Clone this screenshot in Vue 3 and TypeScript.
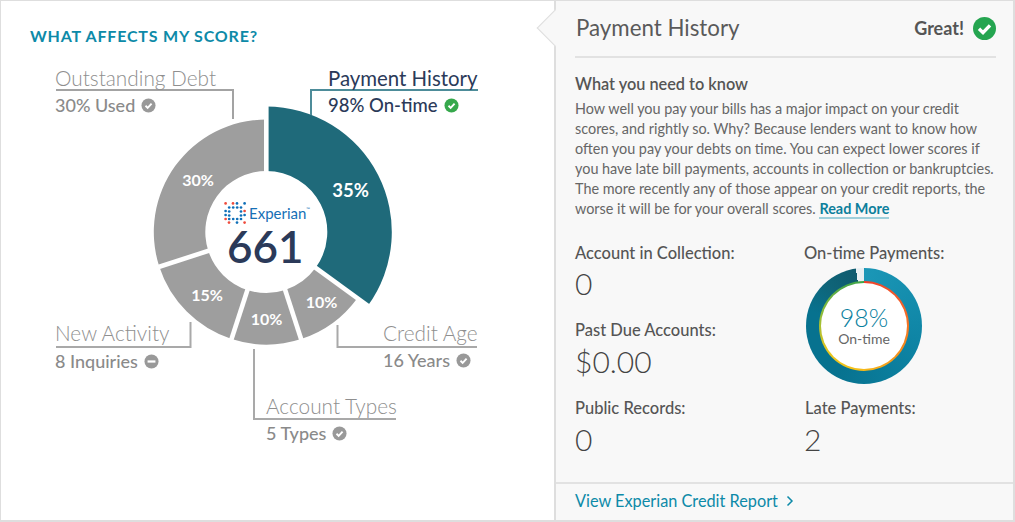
<script setup lang="ts">
const cx = 266.3
const cy = 232
const rad = (d: number) => (d * Math.PI) / 180
const pt = (r: number, a: number) => `${(cx + r * Math.sin(rad(a))).toFixed(2)} ${(cy - r * Math.cos(rad(a))).toFixed(2)}`
const arc = (r0: number, r1: number, a0: number, a1: number) =>
  `M${pt(r0, a0)} L${pt(r1, a0)} A${r1} ${r1} 0 ${a1 - a0 > 180 ? 1 : 0} 1 ${pt(r1, a1)} L${pt(r0, a1)} A${r0} ${r0} 0 ${a1 - a0 > 180 ? 1 : 0} 0 ${pt(r0, a0)}Z`

const segments = [
  { d: arc(61, 125.5, 0, 126), fill: '#1f6a7a' },
  { d: arc(61, 112.5, 126, 162), fill: '#9e9e9e' },
  { d: arc(61, 112.5, 162, 198), fill: '#9e9e9e' },
  { d: arc(61, 112.5, 198, 252), fill: '#9e9e9e' },
  { d: arc(61, 112.5, 252, 360), fill: '#9e9e9e' },
]
const gaps = [0, 126, 162, 198, 252].map((a) => `M${pt(50, a)} L${pt(132, a)}`)
const pcts = [
  { x: 350.5, y: 197, t: '35%', big: true },
  { x: 198, y: 185.5, t: '30%', big: false },
  { x: 207, y: 301, t: '15%', big: false },
  { x: 266.5, y: 324.5, t: '10%', big: false },
  { x: 321.5, y: 307.5, t: '10%', big: false },
]

const red = '#ef4b3c'
const blue = '#0f6fb8'
const dots: { x: number; y: number; c: string }[] = [
  { x: 225.6, y: 203.4, c: red }, { x: 233, y: 203.4, c: red }, { x: 237, y: 203.4, c: blue }, { x: 244.6, y: 203.4, c: blue },
  { x: 225.6, y: 211, c: blue }, { x: 225.6, y: 215, c: blue }, { x: 244.6, y: 211, c: red }, { x: 244.6, y: 215, c: blue },
  { x: 225.6, y: 219, c: red }, { x: 229, y: 222.6, c: red }, { x: 237, y: 222.6, c: blue }, { x: 244.6, y: 222.6, c: red },
]
for (const v of [207.5, 211.5, 215.5, 219]) {
  for (const u of [229.2, 233.2, 237.2, 241]) {
    if (v === 207.5 || v === 219 || u === 229.2 || u === 241) dots.push({ x: u, y: v, c: blue })
  }
}
</script>

<template>
  <div class="frame">
    <section class="left">
      <h2 class="title">WHAT AFFECTS MY SCORE?</h2>

      <svg class="chart" width="553" height="520" viewBox="0 0 553 520">
        <path v-for="(s, i) in segments" :key="i" :d="s.d" :fill="s.fill" />
        <path v-for="(g, i) in gaps" :key="'g' + i" :d="g" stroke="#fff" stroke-width="4.6" />
        <text v-for="(p, i) in pcts" :key="'p' + i" :x="p.x" :y="p.y" :class="['pct', { big: p.big }]" text-anchor="middle">{{ p.t }}</text>
        <circle v-for="(d, i) in dots" :key="'d' + i" :cx="d.x" :cy="d.y" r="1.35" :fill="d.c" />
        <g fill="none" stroke-width="2">
          <path d="M56 90H233V119" stroke="#a3a3a3" />
          <path d="M478 90H311V115" stroke="#4d8c99" />
          <path d="M56 347H190.500V322" stroke="#a9a9a9" />
          <path d="M477 347H337.500V325" stroke="#a9a9a9" />
          <path d="M254 349V419H396" stroke="#a9a9a9" />
        </g>
      </svg>

      <div class="brand">Experian<sup>™</sup></div>
      <div class="score">661</div>

      <div class="callout outstanding">
        <div class="name">Outstanding Debt</div>
        <div class="detail"><span>30% Used</span>
          <svg class="tick" viewBox="0 0 16 16"><circle cx="8" cy="8" r="7.500" fill="#999" /><path d="M4.800 8.300l2.300 2.200 4.200-4.600" fill="none" stroke="#fff" stroke-width="2" /></svg>
        </div>
      </div>
      <div class="callout history">
        <div class="name">Payment History</div>
        <div class="detail"><span>98% On-time</span>
          <svg class="tick" viewBox="0 0 16 16"><circle cx="8" cy="8" r="7.500" fill="#36a84c" /><path d="M4.800 8.300l2.300 2.200 4.200-4.600" fill="none" stroke="#fff" stroke-width="2" /></svg>
        </div>
      </div>
      <div class="callout activity">
        <div class="name">New Activity</div>
        <div class="detail"><span>8 Inquiries</span>
          <svg class="tick" viewBox="0 0 16 16"><circle cx="8" cy="8" r="7.500" fill="#999" /><path d="M3.800 8h8.400" fill="none" stroke="#fff" stroke-width="2.400" /></svg>
        </div>
      </div>
      <div class="callout age">
        <div class="name">Credit Age</div>
        <div class="detail"><span>16 Years</span>
          <svg class="tick" viewBox="0 0 16 16"><circle cx="8" cy="8" r="7.500" fill="#999" /><path d="M4.800 8.300l2.300 2.200 4.200-4.600" fill="none" stroke="#fff" stroke-width="2" /></svg>
        </div>
      </div>
      <div class="callout types">
        <div class="name">Account Types</div>
        <div class="detail"><span>5 Types</span>
          <svg class="tick" viewBox="0 0 16 16"><circle cx="8" cy="8" r="7.500" fill="#999" /><path d="M4.800 8.300l2.300 2.200 4.200-4.600" fill="none" stroke="#fff" stroke-width="2" /></svg>
        </div>
      </div>
    </section>

    <section class="right">
      <span class="pointer"></span>
      <div class="body">
        <header class="head">
          <h1 class="head-title">Payment History</h1>
          <div class="grade"><span>Great!</span>
            <svg class="grade-icon" viewBox="0 0 23 23"><circle cx="11.500" cy="11.500" r="11.500" fill="#25a550" /><path d="M6 11.800l4 3.900 7-7.400" fill="none" stroke="#fff" stroke-width="3.400" /></svg>
          </div>
        </header>

        <h3 class="know">What you need to know</h3>
        <p class="copy">How well you pay your bills has a major impact on your credit scores, and rightly so. Why? Because lenders want to know how often you pay your debts on time. You can expect lower scores if you have late bill payments, accounts in collection or bankruptcies. The more recently any of those appear on your credit reports, the worse it will be for your overall scores. <a class="more">Read More</a></p>

        <div class="stats">
          <div class="col">
            <div class="label">Account in Collection:</div>
            <div class="value">0</div>
            <div class="label second">Past Due Accounts:</div>
            <div class="value v2">$0.00</div>
            <div class="label third">Public Records:</div>
            <div class="value v3">0</div>
          </div>
          <div class="col col-right">
            <div class="label">On-time Payments:</div>
            <div class="ring">
              <div class="ring-inner">
                <div class="ring-hole">
                  <div class="ring-num">98%</div>
                  <div class="ring-cap">On-time</div>
                </div>
              </div>
            </div>
            <div class="label late">Late Payments:</div>
            <div class="value v3">2</div>
          </div>
        </div>
      </div>
      <footer class="foot">
        <a class="foot-link">View Experian Credit Report</a>
        <svg class="chev" width="8" height="12" viewBox="0 0 8 12"><path d="M1.500 1.500L6 6l-4.500 4.500" fill="none" stroke="#0d8aa8" stroke-width="1.500" /></svg>
      </footer>
    </section>
  </div>
</template>

<style>
html, body { margin: 0; background: #fff; }
</style>

<style scoped>
.frame {
  width: 1015px;
  height: 522px;
  box-sizing: border-box;
  display: flex;
  border: 1px solid #dedede;
  border-right-width: 2px;
  border-bottom-width: 2px;
  font-family: Lato, "Open Sans", sans-serif;
  overflow: hidden;
  background: #fff;
}
.left {
  position: relative;
  flex: 0 0 553px;
  box-sizing: border-box;
  padding: 25px 0 0 29px;
}
.title {
  margin: 0;
  font-size: 16px;
  line-height: 20px;
  font-weight: 700;
  letter-spacing: 0.8px;
  color: #0d8aa8;
}
.chart { position: absolute; left: -1px; top: -1px; }
.pct { font: 700 16px Lato, sans-serif; fill: #fff; }
.pct.big { font-size: 18.5px; }
.brand {
  position: absolute;
  left: 248px;
  top: 202px;
  font: 400 15px/20px Lato, sans-serif;
  color: #1670b6;
}
.brand sup { font-size: 5px; vertical-align: 8px; line-height: 0; }
.score {
  position: absolute;
  left: 226px;
  top: 216px;
  font-size: 44px;
  line-height: 58px;
  font-weight: 600;
  color: #2b3a59;
}
.callout { position: absolute; }
.name { font-size: 20.8px; line-height: 24px; font-weight: 300; color: #8f8f8f; }
.detail { font-size: 18px; line-height: 24px; font-weight: 500; color: #8a8a8a; margin-top: 3px; display: flex; align-items: center; gap: 6px; white-space: nowrap; }
.tick { width: 15px; height: 15px; }
.outstanding { left: 54px; top: 65px; }
.history { left: 327px; top: 65px; }
.history .name { color: #2b3a59; font-weight: 400; font-size: 20.4px; }
.history .detail { color: #2b3a59; font-size: 18.5px; }
.activity { left: 54px; top: 320px; }
.activity .detail { margin-top: 4px; }
.age { left: 382px; top: 320px; }
.types { left: 265px; top: 393px; }

.right {
  position: relative;
  flex: 1;
  min-width: 0;
  display: flex;
  flex-direction: column;
  background: #f8f8f8;
  border-left: 2px solid #dedede;
}
.pointer {
  position: absolute;
  left: -14px;
  top: 14px;
  width: 26px;
  height: 26px;
  box-sizing: border-box;
  background: #f8f8f8;
  border-left: 1px solid #dedede;
  border-bottom: 1px solid #dedede;
  transform: rotate(45deg);
}
.body { position: relative; flex: 1; padding: 0 17px 0 19px; }
.head {
  height: 57px;
  box-sizing: border-box;
  display: flex;
  justify-content: space-between;
  align-items: center;
  border-bottom: 2px solid #e2e2e2;
  padding-bottom: 1px;
}
.head-title { margin: 0 0 0 1px; font-size: 22.3px; line-height: 30px; font-weight: 400; color: #5a5a5a; }
.grade { display: flex; align-items: center; gap: 9px; font-size: 18px; font-weight: 700; color: #555; }
.grade-icon { width: 23px; height: 23px; }
.know { margin: 16px 0 0; font-size: 16.3px; line-height: 20px; font-weight: 600; color: #555; }
.copy { margin: 5px 0 0; width: 425px; font-size: 14.4px; line-height: 20px; color: #666; }
.more { color: #0d7f9c; font-weight: 700; border-bottom: 2px solid #9fcfdb; }
.stats { display: flex; margin-top: 24px; }
.col { flex: 0 0 229px; }
.col-right { flex: 1; }
.label { font-size: 16.5px; line-height: 20px; font-weight: 500; color: #555; }
.value { font-size: 30px; line-height: 38px; font-weight: 300; color: #444; margin-top: 1px; }
.v2 { margin-top: 2px; }
.v3 { margin-top: 2px; }
.second { margin-top: 18px; }
.third { margin-top: 18px; }
.ring {
  width: 116px;
  height: 116px;
  margin: 5px 0 0 2px;
  border-radius: 50%;
  display: flex;
  align-items: center;
  justify-content: center;
  background: conic-gradient(#1b97b7 0deg, #0d82a2 120deg, #07728f 210deg, #07728f 285deg, #0f6478 320deg, #0e5a6e 352deg, #e8eff2 352deg, #e8eff2 360deg);
}
.ring-inner {
  width: 90px;
  height: 90px;
  border-radius: 50%;
  display: flex;
  align-items: center;
  justify-content: center;
  background: conic-gradient(#f0402a 0deg, #f2602a 60deg, #f58a1c 120deg, #f5c018 190deg, #e8c61e 235deg, #8fbd3a 285deg, #4fa848 330deg, #3fa648 360deg);
}
.ring-hole {
  width: 86px;
  height: 86px;
  border-radius: 50%;
  background: #fff;
  text-align: center;
  display: flex;
  flex-direction: column;
  justify-content: center;
}
.ring-num { font-size: 25px; line-height: 28px; font-weight: 300; color: #08809e; margin-top: -3px; }
.ring-cap { font-size: 14px; line-height: 15px; color: #666; }
.late { margin-top: 14px; padding-left: 1px; }
.foot {
  height: 38px;
  box-sizing: border-box;
  border-top: 2px solid #e2e2e2;
  padding: 0 0 3px 19px;
  display: flex;
  align-items: center;
  gap: 8px;
}
.foot-link { font-size: 16.3px; color: #0d8aa8; }
.chev { margin-top: 1px; }
</style>
